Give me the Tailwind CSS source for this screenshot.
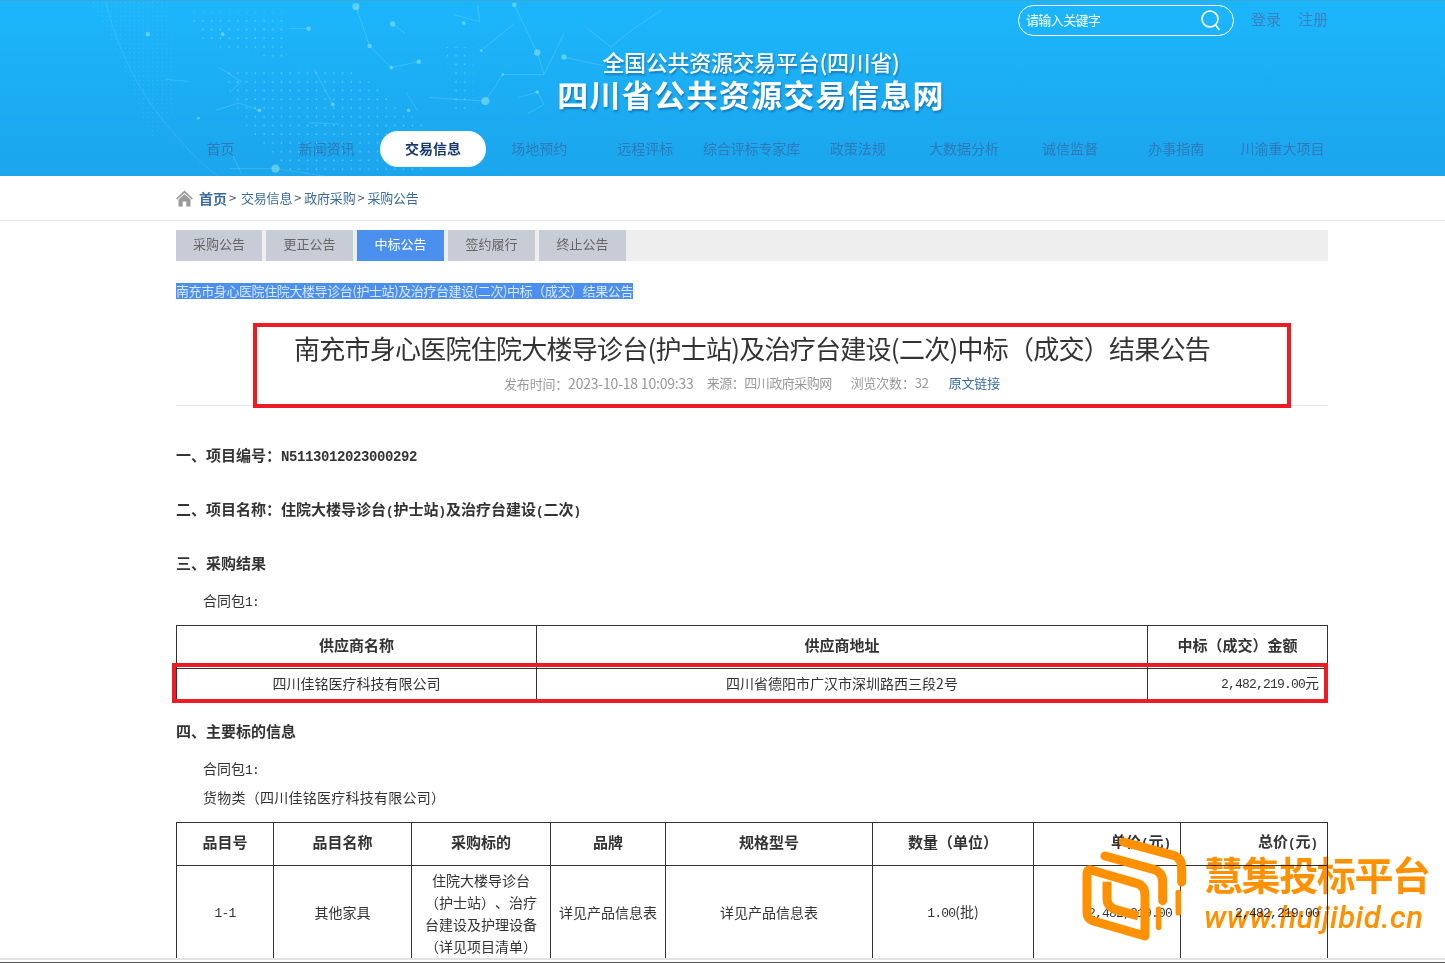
<!DOCTYPE html>
<html lang="zh-CN">
<head>
  <meta charset="UTF-8">
  <title>四川省公共资源交易信息网</title>
  <script src="https://cdn.jsdelivr.net/npm/@tailwindcss/browser@4"></script>
</head>
<body class="relative h-[963px] overflow-hidden bg-white text-[14px] text-[#333] font-['Noto_Sans_CJK_SC',sans-serif] [text-spacing-trim:space-all]">
  <!-- Header -->
  <header class="relative h-[176px] bg-gradient-to-b from-[#1cb6fc] to-[#1ba5ec] border-t border-[#3aa8d8]">
    <!-- globe decoration -->
    <svg class="absolute left-0 top-0" width="720" height="176" viewBox="0 0 1568 383" fill="none">
      <defs>
        <pattern id="dots" width="19" height="19" patternUnits="userSpaceOnUse"><circle cx="5" cy="5" r="1.7" fill="#fff" fill-opacity=".38"/></pattern>
        <pattern id="fine" width="10" height="10" patternUnits="userSpaceOnUse"><circle cx="3" cy="3" r="1" fill="#fff" fill-opacity=".2"/></pattern>
      </defs>
      <path d="M405 25H620V130L450 95Z M480 145L760 140L920 270L925 380H640L525 260Z M970 100H1030V240H990Z" fill="url(#dots)"/>
      <path d="M195 0H370L380 240L330 300L260 120Z" fill="url(#fine)"/>
      <g stroke="#bff0f5" stroke-opacity=".3" stroke-width="1.5">
        <path d="M775 12L805 98L852 145L912 132M855 50L882 70M630 60H672M1120 8L1170 112L1185 160L1228 70M935 210L1057 218L1095 160H1185M1048 108L1118 50M1130 210L1170 198L1185 225L1150 245M470 238L520 222L565 238M500 200L525 175L478 145M685 150L725 225M500 365L600 365M672 265L740 268M500 320L525 375M1228 122L1310 140L1350 120M1280 60L1330 100L1380 60L1440 20M990 30L1045 45L1040 10M360 170L410 175M885 200L910 240"/>
        <path d="M230 0C270 170 380 340 600 470" stroke-opacity=".2"/>
        <path d="M600 365L830 400M840 380L880 395" stroke-opacity=".25"/>
      </g>
      <g fill="#8fe6e6" fill-opacity=".55">
        <circle cx="775" cy="12" r="8"/><circle cx="855" cy="50" r="6"/><circle cx="805" cy="98" r="5"/><circle cx="852" cy="145" r="4"/><circle cx="912" cy="132" r="5"/>
        <circle cx="1057" cy="218" r="9"/><circle cx="1170" cy="112" r="7"/><circle cx="1228" cy="122" r="6"/><circle cx="1120" cy="8" r="5"/><circle cx="600" cy="365" r="9"/>
        <circle cx="322" cy="72" r="5"/><circle cx="1010" cy="48" r="4"/><circle cx="1048" cy="108" r="3"/><circle cx="1095" cy="160" r="3"/><circle cx="1170" cy="198" r="4"/>
        <circle cx="672" cy="60" r="5"/><circle cx="565" cy="238" r="4"/><circle cx="725" cy="225" r="4"/><circle cx="432" cy="255" r="3"/><circle cx="890" cy="238" r="4"/><circle cx="485" cy="72" r="4"/>
      </g>
    </svg>

    <!-- search and login -->
    <div class="relative flex justify-end items-center pt-[3px] pr-[117px] h-[35px]">
      <div class="flex items-center justify-between w-[216px] h-[31px] pl-[7px] pr-[11px] rounded-full border border-white text-white text-[13px] tracking-[-0.6px]">
        <span>请输入关键字</span>
        <svg width="22" height="22" viewBox="0 0 22 22" fill="none" stroke="#fff" stroke-width="1.6"><circle cx="10" cy="10" r="8"/><path d="M15.5 16l3.5 4.5" stroke-linecap="round"/></svg>
      </div>
      <a class="ml-[17px] text-[15px] text-[#3a82bf] pb-[2px]">登录</a>
      <a class="ml-[17px] text-[15px] text-[#3a82bf] pb-[2px]">注册</a>
    </div>

    <!-- site title -->
    <div class="relative flex flex-col items-center pl-[57px] mt-[10px] text-white [text-shadow:1px_2px_2px_rgba(20,80,140,.55)]">
      <div class="text-[22px] leading-[30px] font-medium tracking-[-0.3px]">全国公共资源交易平台(四川省)</div>
      <div class="text-[31px] leading-[36px] font-bold tracking-[1.3px]">四川省公共资源交易信息网</div>
    </div>

    <!-- nav -->
    <nav class="relative flex ml-[167.5px] mt-[19px] text-[14px] text-[#2f7ab8]">
      <a class="w-[106.2px] h-[36px] pb-[2px] flex items-center justify-center">首页</a>
      <a class="w-[106.2px] h-[36px] pb-[2px] flex items-center justify-center">新闻资讯</a>
      <a class="w-[106.2px] h-[36px] pb-[2px] flex items-center justify-center rounded-[18px] bg-white text-[#17396e] font-bold">交易信息</a>
      <a class="w-[106.2px] h-[36px] pb-[2px] flex items-center justify-center">场地预约</a>
      <a class="w-[106.2px] h-[36px] pb-[2px] flex items-center justify-center">远程评标</a>
      <a class="w-[106.2px] h-[36px] pb-[2px] flex items-center justify-center whitespace-nowrap tracking-[-0.1px]">综合评标专家库</a>
      <a class="w-[106.2px] h-[36px] pb-[2px] flex items-center justify-center">政策法规</a>
      <a class="w-[106.2px] h-[36px] pb-[2px] flex items-center justify-center">大数据分析</a>
      <a class="w-[106.2px] h-[36px] pb-[2px] flex items-center justify-center">诚信监督</a>
      <a class="w-[106.2px] h-[36px] pb-[2px] flex items-center justify-center">办事指南</a>
      <a class="w-[106.2px] h-[36px] pb-[2px] flex items-center justify-center">川渝重大项目</a>
    </nav>
  </header>

  <!-- Breadcrumb -->
  <div class="h-[45px] border-b border-[#e6e6e6]">
    <div class="flex items-center h-[44px] ml-[176px] text-[13px] tracking-[-0.2px] text-[#3a6c9c]">
      <svg class="mr-[6px]" width="17" height="17" viewBox="0 0 17 17" fill="#9a9a9a"><path d="M8.5 0.5L17 8.5L15.8 9.6L8.5 3L1.2 9.6L0 8.5Z"/><path d="M2.5 9.5L8.5 4.2L14.5 9.5V16.5H10.3V11.5H6.7V16.5H2.5Z"/></svg>
      <a class="font-bold text-[14px] tracking-normal">首页</a><span class="text-[#555] mx-[2px]">&gt;</span>
      <a class="ml-[3px]">交易信息</a><span class="text-[#555] mx-[2px]">&gt;</span>
      <a class="ml-[1px]">政府采购</a><span class="text-[#555] mx-[2px]">&gt;</span>
      <a class="ml-[1px]">采购公告</a>
    </div>
  </div>

  <main class="w-[1152px] ml-[176px]">
    <!-- Tabs -->
    <div class="flex gap-[4px] mt-[9px] h-[31px] bg-[#eeeeee] text-[13px] text-[#666]">
      <a class="w-[86px] pb-[3px] flex items-center justify-center bg-[#c8ccd7]">采购公告</a>
      <a class="w-[87px] pb-[3px] flex items-center justify-center bg-[#c8ccd7]">更正公告</a>
      <a class="w-[87px] pb-[3px] flex items-center justify-center bg-[#4b90ee] text-white">中标公告</a>
      <a class="w-[87px] pb-[3px] flex items-center justify-center bg-[#c8ccd7]">签约履行</a>
      <a class="w-[87px] pb-[3px] flex items-center justify-center bg-[#c8ccd7]">终止公告</a>
    </div>

    <!-- selected title -->
    <div class="mt-[22px] h-[16px] leading-[16px] text-[13px] tracking-[-0.4px]">
      <span class="inline-block h-[16px] bg-[#4b90ee] text-[#dbe8fb] whitespace-nowrap">南充市身心医院住院大楼导诊台(护士站)及治疗台建设(二次)中标（成交）结果公告</span>
    </div>

    <!-- article head -->
    <div class="mt-[24px] h-[83px] border-b border-[#e6e6e6] flex flex-col items-center">
      <h1 class="mt-[7px] h-[36px] leading-[36px] text-[26px] tracking-[-0.75px] text-[#333] whitespace-nowrap">南充市身心医院住院大楼导诊台(护士站)及治疗台建设(二次)中标（成交）结果公告</h1>
      <div class="mt-[8px] flex text-[13px] leading-[18px] text-[#999] tracking-[-0.2px]">
        <span>发布时间：<span class="text-[14px]">2023-10-18 10:09:33</span></span>
        <span class="ml-[13px] tracking-[-0.5px]">来源：四川政府采购网</span>
        <span class="ml-[19px]">浏览次数：32</span>
        <a class="ml-[20px] text-[#3a6c9c]">原文链接</a>
      </div>
    </div>

    <!-- article body -->
    <div class="mt-[39px] h-[20px] font-bold text-[15px] leading-[20px]">一、项目编号：<span class="font-['Liberation_Mono'] text-[14px] tracking-[-0.4px]">N5113012023000292</span></div>
    <div class="mt-[34px] h-[20px] font-bold text-[15px] leading-[20px]">二、项目名称：住院大楼导诊台<span class="font-['Liberation_Mono'] text-[12.5px]">(</span>护士站<span class="font-['Liberation_Mono'] text-[12.5px]">)</span>及治疗台建设<span class="font-['Liberation_Mono'] text-[12.5px]">(</span>二次<span class="font-['Liberation_Mono'] text-[12.5px]">)</span></div>
    <div class="mt-[34px] h-[20px] font-bold text-[15px] leading-[20px]">三、采购结果</div>
    <div class="mt-[17px] h-[20px] pl-[27px] leading-[20px]">合同包<span class="font-['Liberation_Mono'] text-[13px] tracking-[-0.8px]">1:</span></div>

    <table class="mt-[15px] w-[1151px] table-fixed border-collapse border border-[#333]">
      <colgroup><col class="w-[360px]"><col class="w-[611px]"><col class="w-[180px]"></colgroup>
      <tr class="h-[43px]">
        <th class="border border-[#333] font-bold text-[15px] pb-[3px]">供应商名称</th>
        <th class="border border-[#333] font-bold text-[15px] pb-[3px]">供应商地址</th>
        <th class="border border-[#333] font-bold text-[15px] pb-[3px]">中标（成交）金额</th>
      </tr>
      <tr class="h-[33px]">
        <td class="border border-[#333] text-center pb-[3px]">四川佳铭医疗科技有限公司</td>
        <td class="border border-[#333] text-center pb-[3px]">四川省德阳市广汉市深圳路西三段2号</td>
        <td class="border border-[#333] text-right pr-[8px] pb-[3px]"><span class="font-['Liberation_Mono'] text-[13px] tracking-[-0.8px]">2,482,219.00</span>元</td>
      </tr>
    </table>

    <div class="mt-[19px] h-[20px] font-bold text-[15px] leading-[20px]">四、主要标的信息</div>
    <div class="mt-[17px] h-[20px] pl-[27px] leading-[20px]">合同包<span class="font-['Liberation_Mono'] text-[13px] tracking-[-0.8px]">1:</span></div>
    <div class="mt-[9px] h-[20px] pl-[27px] leading-[20px] tracking-[0.25px]">货物类（四川佳铭医疗科技有限公司）</div>

    <table class="mt-[15px] w-[1151px] table-fixed border-collapse border border-[#333]">
      <colgroup><col class="w-[97px]"><col class="w-[138px]"><col class="w-[139px]"><col class="w-[115px]"><col class="w-[207px]"><col class="w-[161px]"><col class="w-[147px]"><col class="w-[147px]"></colgroup>
      <tr class="h-[43px]">
        <th class="border border-[#333] font-bold text-[15px] pb-[4px]">品目号</th>
        <th class="border border-[#333] font-bold text-[15px] pb-[4px]">品目名称</th>
        <th class="border border-[#333] font-bold text-[15px] pb-[4px]">采购标的</th>
        <th class="border border-[#333] font-bold text-[15px] pb-[4px]">品牌</th>
        <th class="border border-[#333] font-bold text-[15px] pb-[4px]">规格型号</th>
        <th class="border border-[#333] font-bold text-[15px] pb-[4px]">数量（单位）</th>
        <th class="border border-[#333] font-bold text-[15px] pb-[4px] text-right pr-[9px]">单价<span class="font-['Liberation_Mono'] text-[12.5px]">(</span>元<span class="font-['Liberation_Mono'] text-[12.5px]">)</span></th>
        <th class="border border-[#333] font-bold text-[15px] pb-[4px] text-right pr-[9px]">总价<span class="font-['Liberation_Mono'] text-[12.5px]">(</span>元<span class="font-['Liberation_Mono'] text-[12.5px]">)</span></th>
      </tr>
      <tr class="h-[96px]">
        <td class="border border-[#333] text-center font-['Liberation_Mono'] text-[13px] tracking-[-0.8px]">1-1</td>
        <td class="border border-[#333] text-center pb-[2px]">其他家具</td>
        <td class="border border-[#333] text-center leading-[22px] whitespace-nowrap pb-[2px]">住院大楼导诊台<br>（护士站）、治疗<br>台建设及护理设备<br>（详见项目清单）</td>
        <td class="border border-[#333] text-center pb-[2px]">详见产品信息表</td>
        <td class="border border-[#333] text-center pb-[2px]">详见产品信息表</td>
        <td class="border border-[#333] text-center pb-[2px]"><span class="font-['Liberation_Mono'] text-[13px] tracking-[-0.8px]">1.00</span>(批)</td>
        <td class="border border-[#333] text-right pr-[8px] font-['Liberation_Mono'] text-[13px] tracking-[-0.8px]">2,482,219.00</td>
        <td class="border border-[#333] text-right pr-[8px] font-['Liberation_Mono'] text-[13px] tracking-[-0.8px]">2,482,219.00</td>
      </tr>
    </table>
  </main>

  <!-- red annotation boxes -->
  <div class="absolute left-[253px] top-[323px] w-[1038px] h-[85px] border-[4px] border-[#ed1c24]"></div>
  <div class="absolute left-[172px] top-[663px] w-[1156px] h-[40px] border-[4px] border-[#ed1c24]"></div>

  <!-- watermark -->
  <svg class="absolute left-[1075px] top-[830px]" width="120" height="120" viewBox="0 0 360 360" fill="none" stroke="#ff9000" stroke-width="27">
    <path d="M48 120L185 160Q210 168 210 195V318L55 273Q36 267 36 245V132Q36 116 48 120Z" stroke-linejoin="round"/>
    <path d="M90 78L235 118Q263 127 263 155V212" stroke-linecap="round"/>
    <path d="M96 155V205Q96 230 120 238L190 258"/>
    <path d="M145 36L295 76Q320 84 320 112V156" stroke-linecap="round"/>
    <path d="M251 238V292" stroke-width="17" stroke-linecap="round"/>
    <path d="M310 188V248" stroke-width="17" stroke-linecap="round"/>
  </svg>
  <div class="absolute left-[1204px] top-[846px] mix-blend-multiply text-[#ff9000] whitespace-nowrap">
    <div class="text-[39px] leading-[54px] font-bold tracking-[-1.4px]">慧集投标平台</div>
    <div class="text-[31px] leading-[36px] italic font-medium font-['Roboto',sans-serif] tracking-[0.5px]">www.huijibid.cn</div>
  </div>

  <!-- bottom edge -->
  <div class="absolute left-0 bottom-0 w-full h-[5px] bg-white border-t-2 border-[#e2e2e2] border-b border-b-[#555]"></div>
</body>
</html>
